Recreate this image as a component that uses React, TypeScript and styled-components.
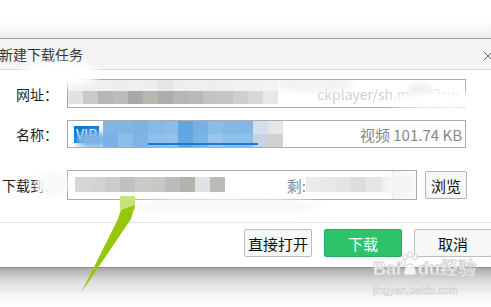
import styled, { createGlobalStyle } from 'styled-components';

const GlobalStyle = createGlobalStyle`
  html, body {
    margin: 0;
    padding: 0;
    background: #ffffff;
  }
  body {
    font-family: "Noto Sans CJK SC", "Noto Sans", sans-serif;
  }
`;

const url1Top = ['#f1f1f1', '#f0f0f0', '#efefef', '#eeeeee', '#efefef', '#eeeeee', '#e5e5e5', '#eeeeee', '#efefef', '#eeeeee', '#f0f0f0', '#f1f1f1', '#f2f2f2', '#f3f3f3'];
const url1Bottom = ['#e2e2e2', '#c9c9c9', '#b6b6b6', '#bcbcbc', '#a9a9a9', '#bbb5b0', '#aaacaf', '#b6b6b6', '#b9b9b9', '#c3c3c3', '#c4c6c4', '#cfcfcf', '#d8d8d8', '#e8e8e8'];
const nameTop = ['#7fb6e6', '#80b5e4', '#7db3e3', '#85b9e6', '#8abce8', '#5ea7e0', '#75b1e4', '#8abde8', '#85b8e6', '#83b7e6', '#d0e0ee', '#e6e6e6'];
const nameBottom = ['#7ab2e4', '#8cbee8', '#7fb5e4', '#8dc0ea', '#92c2ea', '#63a7df', '#7ab4e5', '#9bc6ec', '#8fc0e9', '#8fc0e9', '#c7d3df', '#d3cfcf'];
const pathCells = ['#d6d6d6', '#d3d3d3', '#cccccc', '#c0c0c4', '#cacaca', '#c8c8c4', '#bcbcbc', '#b3b3ae', '#e0e3e6', '#bdbbb8'];
const freeCells = ['#ebebeb', '#e8e8e8', '#e4e4e4', '#dcdcdc', '#e6e6e6', '#ececec', '#f0f0f0'];

const Page = styled.div`
  position: relative;
  width: 491px;
  height: 307px;
  overflow: hidden;
  background: #fff;
`;

const TopShade = styled.div`
  height: 38px;
  background: linear-gradient(to bottom, #ffffff 55%, #ededed 100%);
`;

const Dialog = styled.div`
  margin: 0 -10px;
  background: #fff;
  border-top: 1px solid #9c9c9c;
`;

const TitleBar = styled.div`
  display: flex;
  align-items: center;
  justify-content: space-between;
  height: 30px;
  padding: 0 8px 0 9px;
  background: #f4f4f4;
  border-bottom: 1px solid #d9d9d9;
`;

const Title = styled.span`
  font-size: 14px;
  color: #333;
`;

const Close = styled.svg`
  width: 10px;
  height: 10px;
  margin-top: 4px;
`;

const Body = styled.div`
  position: relative;
  padding: 9px 0 0 10px;
`;

const Row = styled.div<{ $gap: number }>`
  display: flex;
  align-items: center;
  margin-top: ${({ $gap }) => $gap}px;
`;

const Label = styled.span`
  width: 58px;
  margin-right: 9px;
  text-align: right;
  font-size: 14px;
  color: #1e1e1e;
  white-space: nowrap;
`;

const Field = styled.div<{ $w: number; $h: number }>`
  position: relative;
  display: flex;
  align-items: center;
  box-sizing: border-box;
  width: ${({ $w }) => $w}px;
  height: ${({ $h }) => $h}px;
  border: 1px solid #ababab;
  padding: 0 3px 0 6px;
  font-size: 15px;
  color: #888;
  overflow: hidden;
  white-space: nowrap;
`;

const Faint = styled.span<{ $r?: number }>`
  margin-right: ${({ $r }) => $r || 0}px;
  color: #d0d0d0;
  font-size: 14px;
  filter: blur(0.7px);
`;

const Grow = styled.span`
  flex: 1;
`;

const Selected = styled.span`
  background: #0a78d7;
  color: #fff;
  font-size: 14px;
  padding: 0 2px;
  line-height: 17px;
`;

const Remain = styled.span`
  margin-right: 107px;
  color: #8a8a8a;
  font-size: 15px;
`;

const DropPart = styled.div`
  position: absolute;
  top: 0;
  right: 0;
  width: 23px;
  height: 100%;
  border-left: 1px solid #dedede;
  background: #fafafa;
`;

const Mosaic = styled.div<{ $x: number; $y: number; $cols: number; $cw: number; $ch: number }>`
  position: absolute;
  left: ${({ $x }) => $x}px;
  top: ${({ $y }) => $y}px;
  display: grid;
  grid-template-columns: repeat(${({ $cols }) => $cols}, ${({ $cw }) => $cw}px);
  grid-auto-rows: ${({ $ch }) => $ch}px;
`;

const Cell = styled.div<{ $c: string }>`
  background: ${({ $c }) => $c};
`;

const Smudge = styled.div<{ $x: number; $y: number; $w: number; $h: number; $c?: string }>`
  position: absolute;
  left: ${({ $x }) => $x}px;
  top: ${({ $y }) => $y}px;
  width: ${({ $w }) => $w}px;
  height: ${({ $h }) => $h}px;
  background: ${({ $c }) => $c || '#fff'};
  border-radius: 50%;
  filter: blur(3px);
`;

const Underline = styled.div`
  position: absolute;
  left: 80px;
  top: 22px;
  width: 110px;
  height: 2px;
  background: #1a7ad6;
`;

const SmallButton = styled.button`
  box-sizing: border-box;
  width: 42px;
  height: 28px;
  margin-left: 8px;
  padding: 0;
  border: 1px solid #b4b4b4;
  border-radius: 2px;
  background: #f7f7f7;
  font-family: inherit;
  font-size: 15px;
  color: #111;
`;

const Footer = styled.div`
  display: flex;
  justify-content: flex-end;
  gap: 12px;
  margin-top: 22px;
  padding: 6px 9px 10px 0;
  border-top: 1px solid #e6e6e6;
`;

const ActionButton = styled.button<{ $primary?: boolean; $w: number }>`
  box-sizing: border-box;
  width: ${({ $w }) => $w}px;
  height: 28px;
  padding: 0;
  border: 1px solid ${({ $primary }) => ($primary ? '#27ab5e' : '#bdbdbd')};
  border-radius: 2px;
  background: ${({ $primary }) => ($primary ? '#2ec46c' : '#f7f7f7')};
  color: ${({ $primary }) => ($primary ? '#fff' : '#111')};
  font-family: inherit;
  font-size: 15px;
`;

const BottomShade = styled.div`
  height: 40px;
  border-top: 1px solid #8e8e8e;
  background: linear-gradient(to bottom, #a9a9a9 0%, #d9d9d9 30%, #f6f6f6 70%, #ffffff 100%);
`;

const Overlay = styled.svg`
  position: absolute;
  left: 0;
  top: 0;
  width: 491px;
  height: 307px;
  pointer-events: none;
`;

const Watermark = styled.div`
  position: absolute;
  left: 373px;
  top: 258px;
  white-space: nowrap;
  color: rgba(255, 255, 255, 0.85);
  -webkit-text-stroke: 1px #cfcfcf;
  font-family: "Liberation Sans", "Noto Sans CJK SC", sans-serif;
`;

const MarkLine = styled.div`
  display: flex;
  align-items: center;
  height: 22px;
  font-size: 18px;
  font-weight: bold;
  line-height: 22px;
`;

const Paw = styled.svg`
  width: 17px;
  height: 26px;
  margin: -10px 0 0;
  overflow: visible;
`;

const MarkSite = styled.div`
  margin-top: 4px;
  font-size: 10.5px;
  line-height: 12px;
  -webkit-text-stroke: 0.6px #d0d0d0;
`;

const cells = (list: string[]) => list.map((c, i) => <Cell key={i} $c={c} />);

export default function App() {
  return (
    <>
      <GlobalStyle />
      <Page>
        <TopShade />
        <Dialog>
          <TitleBar>
            <Title>新建下载任务</Title>
            <Close viewBox="0 0 10 10">
              <path d="M0.5 0.5 L9.5 9.5 M9.5 0.5 L0.5 9.5" stroke="#666" strokeWidth="1" fill="none" />
            </Close>
          </TitleBar>
          <Body>
            <Row $gap={0}>
              <Label>网址：</Label>
              <Field $w={399} $h={29}>
                <Faint>http</Faint>
                <Grow />
                <Faint $r={3}>ckplayer/sh.m3u8?cw</Faint>
                <Mosaic $x={0} $y={-2} $cols={14} $cw={15} $ch={13}>
                  {cells(url1Top)}
                  {cells(url1Bottom)}
                </Mosaic>
                <Smudge $x={205} $y={-6} $w={80} $h={18} $c="#f2f2f2" />
                <Smudge $x={340} $y={3} $w={24} $h={20} $c="#eeeeee" />
              </Field>
            </Row>
            <Row $gap={12}>
              <Label>名称：</Label>
              <Field $w={399} $h={28}>
                <Selected>VIP</Selected>
                <Grow />
                视频 101.74 KB
                <Smudge $x={8} $y={10} $w={34} $h={18} $c="#7fb4e4" />
                <Mosaic $x={35} $y={-1} $cols={12} $cw={15} $ch={14}>
                  {cells(nameTop)}
                  {cells(nameBottom)}
                </Mosaic>
                <Underline />
              </Field>
            </Row>
            <Row $gap={22}>
              <Label>下载到：</Label>
              <Field $w={350} $h={30}>
                <Grow />
                <Remain>剩:</Remain>
                <DropPart />
                <Mosaic $x={7} $y={6} $cols={10} $cw={15} $ch={15}>
                  {cells(pathCells)}
                </Mosaic>
                <Mosaic $x={238} $y={6} $cols={7} $cw={15} $ch={15}>
                  {cells(freeCells)}
                </Mosaic>
                <Smudge $x={316} $y={0} $w={30} $h={28} $c="#f5f5f5" />
              </Field>
              <SmallButton>浏览</SmallButton>
            </Row>
            <Smudge $x={30} $y={-8} $w={80} $h={24} />
            <Smudge $x={46} $y={102} $w={32} $h={24} $c="#f7f9fb" />
            <Smudge $x={400} $y={22} $w={110} $h={18} />
            <Smudge $x={140} $y={128} $w={190} $h={16} $c="#f8f8f8" />
          </Body>
          <Footer>
            <ActionButton $w={68}>直接打开</ActionButton>
            <ActionButton $w={78} $primary>下载</ActionButton>
            <ActionButton $w={78}>取消</ActionButton>
          </Footer>
        </Dialog>
        <BottomShade />
        <Overlay viewBox="0 0 491 307">
          <rect x="120" y="196" width="15" height="14" fill="#c9e37b" />
          <polygon points="121,210 135,205 131,219 81,293 117,221" fill="#96c80a" />
        </Overlay>
        <Watermark>
          <MarkLine>
            Bai
            <Paw viewBox="0 0 17 26">
              <g fill="rgba(255,255,255,0.85)" stroke="#cfcfcf" strokeWidth="1">
                <ellipse cx="4" cy="6" rx="2.2" ry="3" />
                <ellipse cx="9" cy="3.5" rx="2.2" ry="3" />
                <ellipse cx="14" cy="6" rx="2.2" ry="3" />
                <ellipse cx="2.5" cy="12" rx="2" ry="2.6" />
                <path d="M3 24 C3 17 6 13 9 13 C12 13 15 17 15 24 Z" />
              </g>
            </Paw>
            du经验
          </MarkLine>
          <MarkSite>jingyan.baidu.com</MarkSite>
        </Watermark>
      </Page>
    </>
  );
}
